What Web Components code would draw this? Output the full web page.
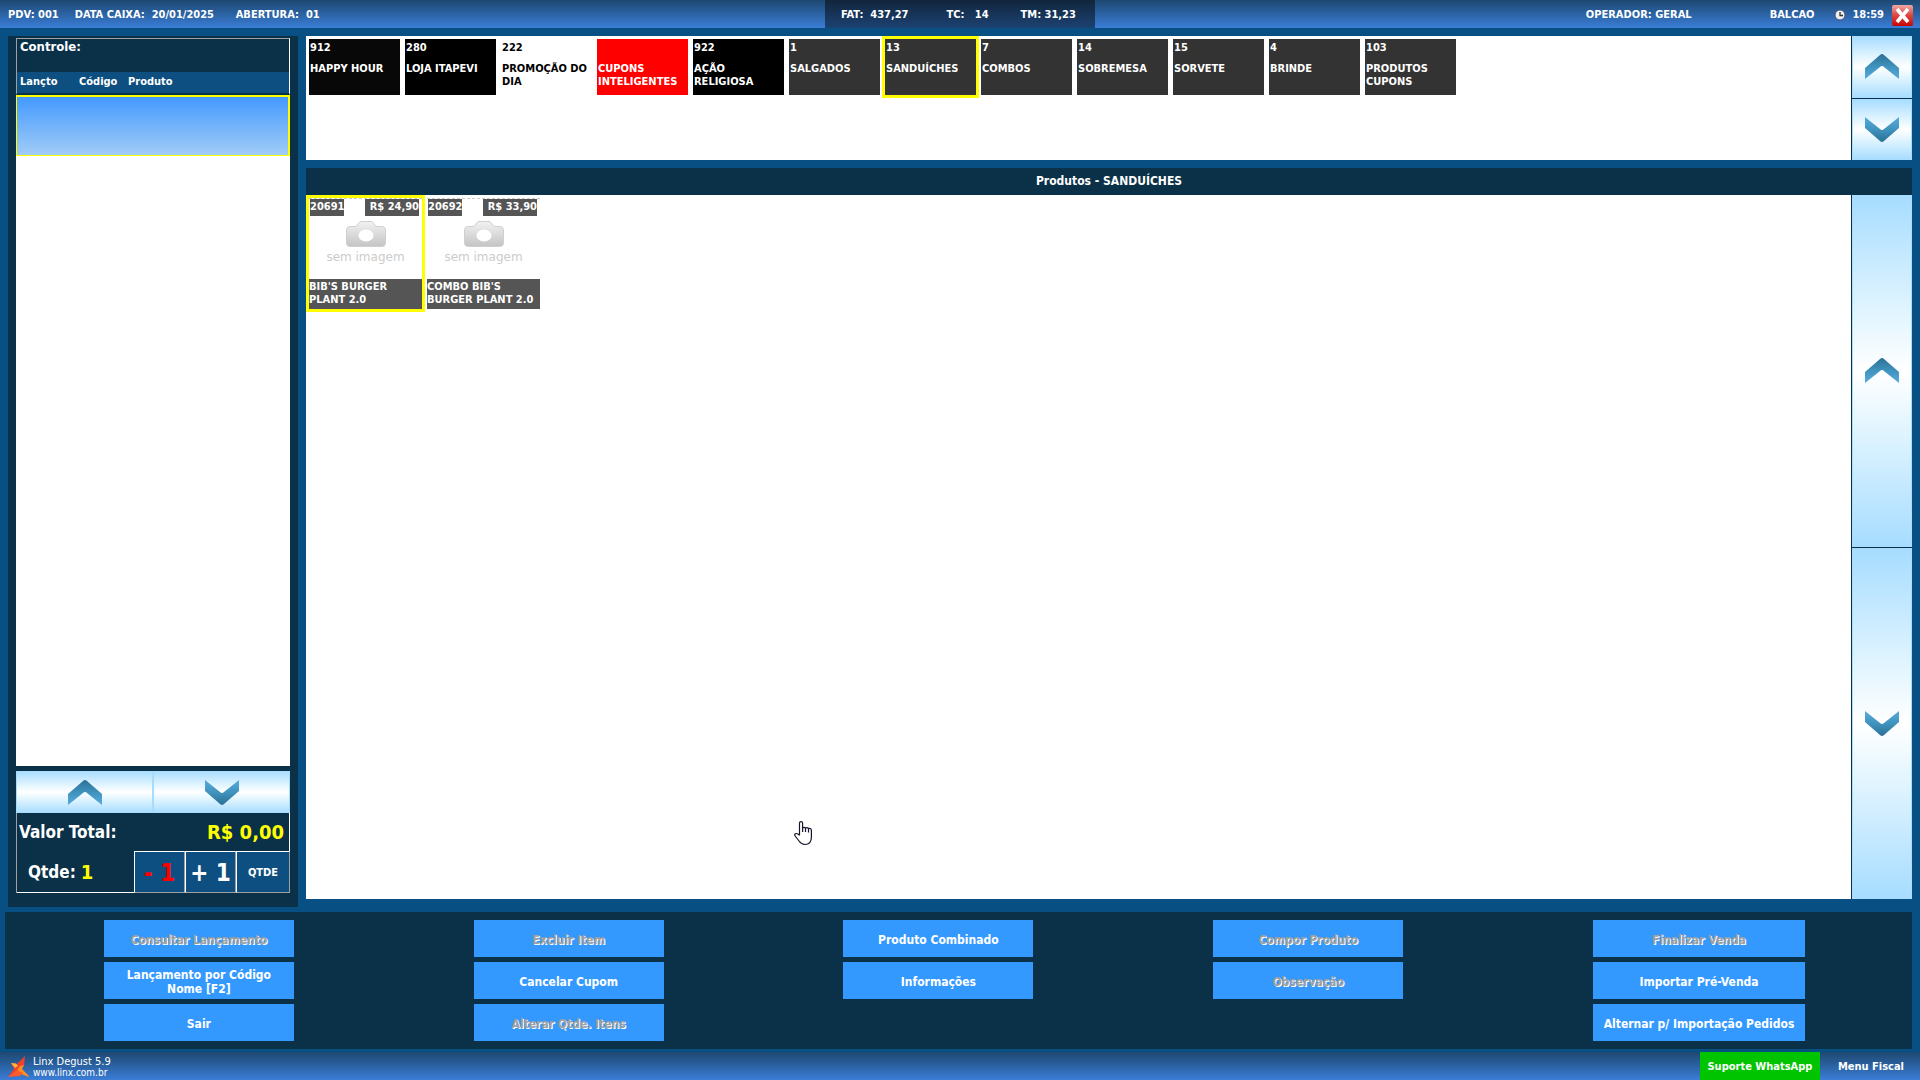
<!DOCTYPE html>
<html lang="pt-BR">
<head>
<meta charset="UTF-8">
<title>Linx Degust</title>
<style>
    html, body {
        margin: 0;
        height: 100%;
    }
    body {
        --frame: #085083;
        --panel: #0a3148;
        --header: #0d4f80;
        --action: #3399ff;
        --dark-tile: #333333;
        background: var(--frame);
        color: white;
        font: bold 12px/16px "DejaVu Sans Condensed", "Open Sans", sans-serif;
    }
</style>
</head>
<body>
<pos-app>
    <pos-topbar slot="top"></pos-topbar>
    <pos-order slot="order"></pos-order>
    <pos-categories slot="catalog">
        <category-tile code="912" color="#080808">HAPPY HOUR</category-tile>
        <category-tile code="280" color="#000000">LOJA ITAPEVI</category-tile>
        <category-tile code="222" color="#ffffff" text="#000000">PROMOÇÃO DO DIA</category-tile>
        <category-tile code="" color="#ff0000">CUPONS INTELIGENTES</category-tile>
        <category-tile code="922" color="#000000">AÇÃO RELIGIOSA</category-tile>
        <category-tile code="1">SALGADOS</category-tile>
        <category-tile code="13" selected>SANDUÍCHES</category-tile>
        <category-tile code="7">COMBOS</category-tile>
        <category-tile code="14">SOBREMESA</category-tile>
        <category-tile code="15">SORVETE</category-tile>
        <category-tile code="4">BRINDE</category-tile>
        <category-tile code="103">PRODUTOS CUPONS</category-tile>
    </pos-categories>
    <pos-products slot="catalog" heading="Produtos - SANDUÍCHES">
        <product-card code="20691" price="R$ 24,90" selected>BIB'S BURGER PLANT 2.0</product-card>
        <product-card code="20692" price="R$ 33,90">COMBO BIB'S BURGER PLANT 2.0</product-card>
    </pos-products>
    <pos-actions slot="actions">
        <action-button slot="c1" disabled>Consultar Lançamento</action-button>
        <action-button slot="c1">Lançamento por Código Nome [F2]</action-button>
        <action-button slot="c1">Sair</action-button>
        <action-button slot="c2" disabled>Excluir Item</action-button>
        <action-button slot="c2">Cancelar Cupom</action-button>
        <action-button slot="c2" disabled>Alterar Qtde. Itens</action-button>
        <action-button slot="c3">Produto Combinado</action-button>
        <action-button slot="c3">Informações</action-button>
        <action-button slot="c4" disabled>Compor Produto</action-button>
        <action-button slot="c4" disabled>Observação</action-button>
        <action-button slot="c5" disabled>Finalizar Venda</action-button>
        <action-button slot="c5">Importar Pré-Venda</action-button>
        <action-button slot="c5">Alternar p/ Importação Pedidos</action-button>
    </pos-actions>
    <pos-footer slot="footer"></pos-footer>
</pos-app>
<hand-cursor></hand-cursor>

<script>
// Shared by every element: border-box sizing and real buttons without the browser look
const reset = `
    :host, * { box-sizing: border-box; }
    button {
        margin: 0;
        padding: 0;
        border: 0;
        border-radius: 0;
        background: none;
        color: inherit;
        font: inherit;
        cursor: pointer;
    }
`;

class PosElement extends HTMLElement {
    constructor() {
        super();
        this.attachShadow({ mode: "open" });
    }

    connectedCallback() {
        this.shadowRoot.innerHTML = `<style>${reset}</style>${this.render()}`;
    }
}

class PosApp extends PosElement {
    render() {
        return `
            <style>
                :host {
                    display: flex;
                    flex-direction: column;
                    min-height: 100vh;
                }
                .work {
                    flex: 1;
                    display: flex;
                    gap: 8px;
                    padding: 8px 8px 5px;
                }
                .catalog {
                    flex: 1;
                    min-width: 0;
                    display: flex;
                    flex-direction: column;
                    gap: 8px;
                    padding-bottom: 8px;
                }
                .actions {
                    padding: 0 8px 3px 5px;
                }
            </style>
            <slot name="top"></slot>
            <main class="work">
                <slot name="order"></slot>
                <div class="catalog"><slot name="catalog"></slot></div>
            </main>
            <div class="actions"><slot name="actions"></slot></div>
            <slot name="footer"></slot>
        `;
    }
}

class PosTopbar extends PosElement {
    render() {
        return `
            <style>
                :host {
                    display: grid;
                    grid-template-columns: 1fr 270px 1fr;
                    height: 28px;
                    background: linear-gradient(#1e4872, #2c65a8 55%, #3b7dd8);
                    font-size: 11px;
                    white-space: pre;
                }
                div {
                    display: flex;
                    align-items: center;
                    padding-top: 2px;
                }
                .left {
                    gap: 16px;
                    padding-left: 8px;
                }
                .date {
                    min-width: 145px;
                }
                .totals {
                    gap: 32px;
                    padding-left: 16px;
                    background: linear-gradient(#11253c, #1c4272);
                }
                .totals span:first-child {
                    margin-right: 6px;
                }
                .right {
                    justify-content: flex-end;
                    padding-right: 7px;
                }
                .operator {
                    margin-right: 78px;
                }
                .clock {
                    margin: 0 6px 0 20px;
                }
                button {
                    display: flex;
                    margin-left: 8px;
                }
            </style>
            <div class="left">
                <span>PDV: 001</span>
                <span class="date">DATA CAIXA:  20/01/2025</span>
                <span>ABERTURA:  01</span>
            </div>
            <div class="totals">
                <span>FAT:  437,27</span>
                <span>TC:   14</span>
                <span>TM: 31,23</span>
            </div>
            <div class="right">
                <span class="operator">OPERADOR: GERAL</span>
                <span>BALCAO</span>
                <svg class="clock" width="12" height="12" viewBox="0 0 12 12">
                    <circle cx="6" cy="6" r="5" fill="#eeeeee" stroke="#4c4c80" stroke-width="1"/>
                    <path d="M6 3v3.500h3" fill="none" stroke="#333" stroke-width="1.300"/>
                </svg>
                <span>18:59</span>
                <button aria-label="Fechar">
                    <svg width="21" height="21" viewBox="0 0 21 21">
                        <defs>
                            <linearGradient id="red" x1="0" y1="0" x2="0" y2="1">
                                <stop offset="0" stop-color="#f0a8a4"/>
                                <stop offset=".45" stop-color="#dd4f48"/>
                                <stop offset="1" stop-color="#c80404"/>
                            </linearGradient>
                        </defs>
                        <rect width="21" height="21" rx="2" fill="url(#red)"/>
                        <path d="M5 4l11 13M16 4L5 17" stroke="#fff" stroke-width="3.600"/>
                    </svg>
                </button>
            </div>
        `;
    }
}

// Pale blue scroll button with a chevron, direction="up" or "down"
class ArrowButton extends PosElement {
    render() {
        const up = this.getAttribute("direction") === "up";
        return `
            <style>
                :host {
                    display: flex;
                }
                button {
                    flex: 1;
                    display: flex;
                    align-items: center;
                    justify-content: center;
                    border: solid #a6dcff;
                    border-width: 0 1px;
                    background: linear-gradient(#a6dcff, #dff4ff 32%, #ffffff 50%, #dff4ff 68%, #a6dcff);
                }
            </style>
            <button aria-label="${up ? "Subir" : "Descer"}">
                <svg width="34" height="25" viewBox="0 0 34 25">
                    <defs>
                        <linearGradient id="blue" x1="0" y1="0" x2="0" y2="1">
                            <stop offset="0" stop-color="#2c7096"/>
                            <stop offset=".5" stop-color="#3f93bd"/>
                            <stop offset="1" stop-color="#5aaade"/>
                        </linearGradient>
                    </defs>
                    <path fill="url(#blue)" ${up ? "" : 'transform="matrix(1 0 0 -1 0 25)"'}
                        d="M0 14L15 1Q17 -1 19 1L34 14V25L19 13Q17 11 15 13L0 25Z"/>
                </svg>
            </button>
        `;
    }
}

class PosOrder extends PosElement {
    render() {
        return `
            <style>
                :host {
                    display: flex;
                    flex-direction: column;
                    width: 290px;
                    padding: 2px 8px 14px;
                    background: var(--panel);
                }
                .list {
                    flex: 1;
                    display: flex;
                    flex-direction: column;
                    background: white;
                }
                .control {
                    height: 34px;
                    padding: 0 3px;
                    border: 1px solid #a0a0a0;
                    border-right-color: white;
                    border-bottom: 0;
                    background: var(--panel);
                    font-size: 13px;
                }
                table {
                    width: 100%;
                    border-spacing: 0;
                    table-layout: fixed;
                    background: var(--panel);
                }
                th {
                    height: 23px;
                    padding: 0 0 1px 3px;
                    background: var(--header);
                    border-bottom: 2px solid var(--panel);
                    font-size: 11px;
                    text-align: left;
                }
                th:first-child { width: 60px; border-left: 1px solid #a0a0a0; }
                th:nth-child(2) { width: 49px; }
                th:last-child { border-right: 1px solid white; }
                td {
                    height: 61px;
                    border: solid #ffff00;
                    border-width: 2px 2px 1px 1px;
                    background: linear-gradient(#4499ff, #a0ccf6);
                }
                .arrows {
                    display: grid;
                    grid-template-columns: 1fr 1fr;
                    height: 42px;
                    margin-top: 5px;
                }
                .total, .quantity {
                    display: flex;
                    align-items: center;
                    font-size: 17px;
                }
                .total {
                    justify-content: space-between;
                    height: 38px;
                    padding: 0 5px 0 2px;
                    border: solid #a0a0a0;
                    border-width: 0 1px;
                    border-right-color: white;
                }
                .total b, .quantity b {
                    color: #ffff00;
                    font-size: 20px;
                }
                .quantity {
                    height: 42px;
                    border-left: 1px solid #a0a0a0;
                }
                .quantity p {
                    flex: 1;
                    display: flex;
                    align-items: center;
                    gap: 5px;
                    align-self: stretch;
                    margin: 0;
                    padding-left: 11px;
                    border-bottom: 1px solid white;
                }
                .quantity button {
                    width: 51px;
                    align-self: stretch;
                    padding-top: 2px;
                    border: 1px solid;
                    border-color: white #a0a0a0 #a0a0a0 white;
                    background: var(--header);
                    font-size: 24px;
                    white-space: nowrap;
                }
                .quantity .minus { color: #ff0000; }
                .quantity .edit {
                    width: 54px;
                    font-size: 11px;
                }
            </style>
            <div class="list">
                <div class="control">Controle:</div>
                <table>
                    <thead><tr><th>Lançto</th><th>Código</th><th>Produto</th></tr></thead>
                    <tbody><tr><td colspan="3"></td></tr></tbody>
                </table>
            </div>
            <div class="arrows">
                <arrow-button direction="up"></arrow-button>
                <arrow-button direction="down"></arrow-button>
            </div>
            <div class="total"><span>Valor Total:</span><b>R$ 0,00</b></div>
            <div class="quantity">
                <p><span>Qtde:</span><b>1</b></p>
                <button class="minus">- 1</button>
                <button>+ 1</button>
                <button class="edit">QTDE</button>
            </div>
        `;
    }
}

class CategoryTile extends PosElement {
    render() {
        const color = this.getAttribute("color") || "var(--dark-tile)";
        const text = this.getAttribute("text") || "white";
        return `
            <style>
                :host {
                    display: flex;
                    width: 91px;
                    height: 56px;
                }
                :host([selected]) {
                    outline: 3px solid #ffff00;
                }
                button {
                    flex: 1;
                    display: flex;
                    flex-direction: column;
                    gap: 8px;
                    min-width: 0;
                    padding: 2px 1px;
                    background: ${color};
                    color: ${text};
                    font-size: 11px;
                    line-height: 13px;
                    text-align: left;
                }
                .code {
                    height: 13px;
                }
            </style>
            <button>
                <span class="code">${this.getAttribute("code")}</span>
                <span><slot></slot></span>
            </button>
        `;
    }
}

class PosCategories extends PosElement {
    render() {
        return `
            <style>
                :host {
                    display: flex;
                    height: 124px;
                    background: white;
                }
                .tiles {
                    flex: 1;
                    display: flex;
                    flex-wrap: wrap;
                    align-content: flex-start;
                    gap: 5px;
                    padding: 3px;
                }
                .scroll {
                    display: grid;
                    grid-template-rows: 1fr 1fr;
                    gap: 1px;
                    width: 61px;
                    padding-left: 1px;
                    background: var(--panel);
                }
            </style>
            <div class="tiles"><slot></slot></div>
            <div class="scroll">
                <arrow-button direction="up"></arrow-button>
                <arrow-button direction="down"></arrow-button>
            </div>
        `;
    }
}

class PosProducts extends PosElement {
    render() {
        return `
            <style>
                :host {
                    flex: 1;
                    display: flex;
                    flex-direction: column;
                }
                h1 {
                    margin: 0;
                    padding: 5px 0 6px;
                    background: var(--panel);
                    font-size: 12px;
                    line-height: 16px;
                    text-align: center;
                }
                .body {
                    flex: 1;
                    display: flex;
                    background: white;
                }
                .cards {
                    flex: 1;
                    display: flex;
                    flex-wrap: wrap;
                    align-content: flex-start;
                    gap: 5px;
                    padding: 3px;
                }
                .scroll {
                    display: grid;
                    grid-template-rows: 1fr 1fr;
                    gap: 1px;
                    width: 61px;
                    padding-left: 1px;
                    background: var(--panel);
                }
            </style>
            <h1>${this.getAttribute("heading")}</h1>
            <div class="body">
                <div class="cards"><slot></slot></div>
                <div class="scroll">
                    <arrow-button direction="up"></arrow-button>
                    <arrow-button direction="down"></arrow-button>
                </div>
            </div>
        `;
    }
}

class ProductCard extends PosElement {
    render() {
        return `
            <style>
                :host {
                    display: flex;
                    width: 113px;
                    height: 111px;
                }
                :host([selected]) {
                    outline: 3px solid #ffff00;
                }
                button {
                    flex: 1;
                    display: flex;
                    flex-direction: column;
                    min-width: 0;
                    border-top: 1px dashed #cccccc;
                    font-size: 11px;
                    line-height: 13px;
                    text-align: left;
                }
                .top {
                    display: flex;
                    justify-content: space-between;
                    padding: 0 3px 0 1px;
                    line-height: 15px;
                }
                .top span {
                    height: 17px;
                    background: #555555;
                }
                .price {
                    padding-left: 5px;
                }
                .photo {
                    flex: 1;
                    display: flex;
                    flex-direction: column;
                    align-items: center;
                    gap: 4px;
                    padding-top: 5px;
                    color: #cccccc;
                    font-size: 12px;
                    font-weight: normal;
                    font-family: "DejaVu Sans", sans-serif;
                }
                .name {
                    height: 30px;
                    padding-top: 1px;
                    background: #555555;
                }
            </style>
            <button>
                <span class="top">
                    <span>${this.getAttribute("code")}</span>
                    <span class="price">${this.getAttribute("price")}</span>
                </span>
                <span class="photo">
                    <svg width="40" height="26" viewBox="0 0 40 26">
                        <defs>
                            <linearGradient id="body" x1="0" y1="0" x2="0" y2="1">
                                <stop offset="0" stop-color="#f2f2f2"/>
                                <stop offset="1" stop-color="#c4c4c4"/>
                            </linearGradient>
                        </defs>
                        <path fill="url(#body)" stroke="#cfcfcf"
                            d="M4 5.500H9Q11 5.500 12 3L13 1.500Q13.500 .5 15 .5H25Q26.500 .5 27 1.500L28 3Q29 5.500 31 5.500H36Q39.500 5.500 39.500 9V22Q39.500 25.500 36 25.500H4Q.5 25.500 .5 22V9Q.5 5.500 4 5.500Z"/>
                        <ellipse cx="20" cy="14.500" rx="7.500" ry="6" fill="#fff"/>
                    </svg>
                    <span>sem imagem</span>
                </span>
                <span class="name"><slot></slot></span>
            </button>
        `;
    }
}

class ActionButton extends PosElement {
    render() {
        return `
            <style>
                :host {
                    display: flex;
                    height: 37px;
                }
                button {
                    flex: 1;
                    padding: 2px 16px 0;
                    background: var(--action);
                    font-size: 12px;
                    line-height: 14px;
                }
                :host([slot="c5"]) button {
                    padding: 2px 0 0;
                }
                button:disabled {
                    color: #a0a0a0;
                    text-shadow: 1px 1px #ffffff;
                    cursor: default;
                }
            </style>
            <button ${this.hasAttribute("disabled") ? "disabled" : ""}><slot></slot></button>
        `;
    }
}

class PosActions extends PosElement {
    render() {
        return `
            <style>
                :host {
                    display: grid;
                    grid-template-columns: repeat(4, 1fr) 412px;
                    padding: 8px 7px 8px 9px;
                    background: var(--panel);
                }
                div {
                    display: flex;
                    flex-direction: column;
                    gap: 5px;
                    width: 190px;
                    margin: 0 auto;
                }
                div:last-child {
                    width: 212px;
                }
            </style>
            <div><slot name="c1"></slot></div>
            <div><slot name="c2"></slot></div>
            <div><slot name="c3"></slot></div>
            <div><slot name="c4"></slot></div>
            <div><slot name="c5"></slot></div>
        `;
    }
}

class PosFooter extends PosElement {
    render() {
        return `
            <style>
                :host {
                    display: flex;
                    align-items: stretch;
                    height: 28px;
                    background: linear-gradient(#1e4872, #2c65a8 55%, #3b7dd8);
                }
                svg {
                    margin: 4px 4px 0 8px;
                }
                .brand {
                    flex: 1;
                    padding-top: 4px;
                    font-size: 11px;
                    font-weight: normal;
                    line-height: 12px;
                }
                .brand a {
                    display: block;
                    color: inherit;
                    font-size: 10px;
                    line-height: 10px;
                    text-decoration: none;
                }
                button {
                    padding-top: 2px;
                    font-size: 11px;
                }
                .support {
                    width: 120px;
                    background: #00c400;
                }
                .menu {
                    padding: 2px 16px 0 18px;
                }
            </style>
            <svg width="21" height="21" viewBox="0 0 21 21">
                <path d="M17 0L16 10L9 15L0 21L6 13L3 7L9 8Z" fill="#f0402c"/>
                <path d="M3 7L8 7.500L10 10L7 12Z" fill="#ffb43c"/>
                <path d="M12 10L16 9L14 13L20 19L21 21L13 18L9 14Z" fill="#ff9020"/>
                <path d="M9 14L15 17L12 20L0 21Z" fill="#ff5a2c"/>
            </svg>
            <div class="brand">Linx Degust 5.9<a href="#">www.linx.com.br</a></div>
            <button class="support">Suporte WhatsApp</button>
            <button class="menu">Menu Fiscal</button>
        `;
    }
}

// Pointer floating over the product area
class HandCursor extends PosElement {
    render() {
        return `
            <style>
                :host {
                    position: absolute;
                    left: 794px;
                    top: 821px;
                    pointer-events: none;
                }
            </style>
            <svg width="19" height="25" viewBox="0 0 19 25">
                <path fill="#fff" stroke="#15152c" stroke-width="1.200" stroke-linejoin="round"
                    d="M5.500 14V2Q5.500 .6 7 .6T8.600 2V7Q10 5.800 11.500 7Q13 6 14.500 7.500Q17.400 6.800 17.400 9.500V16Q17.400 23.500 11 23.500Q7.500 23.500 5 20L.8 14.500Q.4 12.500 2.500 12.500Q4 12.500 5.500 14.500"/>
                <path fill="none" stroke="#15152c" stroke-width="1.200" d="M8.600 6V11M11.500 7V11M14.500 7.500V11.500"/>
            </svg>
        `;
    }
}

customElements.define("arrow-button", ArrowButton);
customElements.define("category-tile", CategoryTile);
customElements.define("product-card", ProductCard);
customElements.define("action-button", ActionButton);
customElements.define("pos-topbar", PosTopbar);
customElements.define("pos-order", PosOrder);
customElements.define("pos-categories", PosCategories);
customElements.define("pos-products", PosProducts);
customElements.define("pos-actions", PosActions);
customElements.define("pos-footer", PosFooter);
customElements.define("pos-app", PosApp);
customElements.define("hand-cursor", HandCursor);
</script>
</body>
</html>
